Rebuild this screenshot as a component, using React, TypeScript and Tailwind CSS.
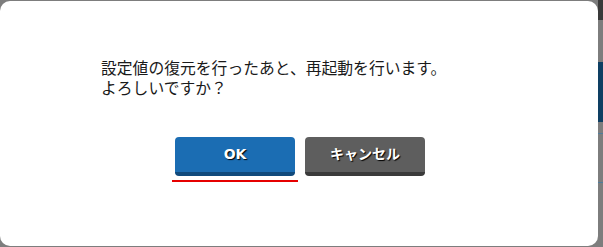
import React from 'react';

const font = { fontFamily: '"Liberation Sans", "Noto Sans CJK JP", sans-serif' };
const btnFont = { fontFamily: '"DejaVu Sans", "Noto Sans CJK JP", sans-serif' };

export default function App() {
  return (
    <div className="w-[603px] h-[247px] bg-[#7d7d7d] flex overflow-hidden" style={font}>
      <div className="w-[598px] h-[245px] mt-px bg-white rounded-[10px] flex flex-col">
        <div className="pt-[58px] pl-[101px] text-[15.8px] leading-[20px] text-[#1a1a1a]">
          <p>設定値の復元を行ったあと、再起動を行います。</p>
          <p>よろしいですか？</p>
        </div>
        <div className="mt-[38px] flex gap-[10px] pl-[175px]">
          <div className="flex flex-col items-center w-[120px]">
            <button style={btnFont} className="w-[120px] h-[39px] shrink-0 rounded-[4px] bg-[#1b6db3] border-b-4 border-[#104a7c] text-white font-bold text-[14px] [text-shadow:1px_1px_1px_#000]">
              OK
            </button>
            <div className="mt-[4px] w-[126px] shrink-0 h-[2px] bg-[#e60000]" />
          </div>
          <button style={btnFont} className="w-[120px] h-[39px] rounded-[4px] bg-[#5e5e5e] border-b-4 border-[#3a3a3a] text-white font-bold text-[14px] [text-shadow:1px_1px_1px_#000]">
            キャンセル
          </button>
        </div>
      </div>
      <div className="flex-1 flex flex-col">
        <div className="h-[20px] bg-[#3a3a3a]" />
        <div className="h-[42px]" />
        <div className="h-[60px] bg-[#0e3f63]" />
        <div className="h-[11px]" />
        <div className="h-[1px] bg-[#4f7c9c]" />
        <div className="h-[48px]" />
        <div className="h-[1px] bg-[#4f7c9c]" />
      </div>
    </div>
  );
}
